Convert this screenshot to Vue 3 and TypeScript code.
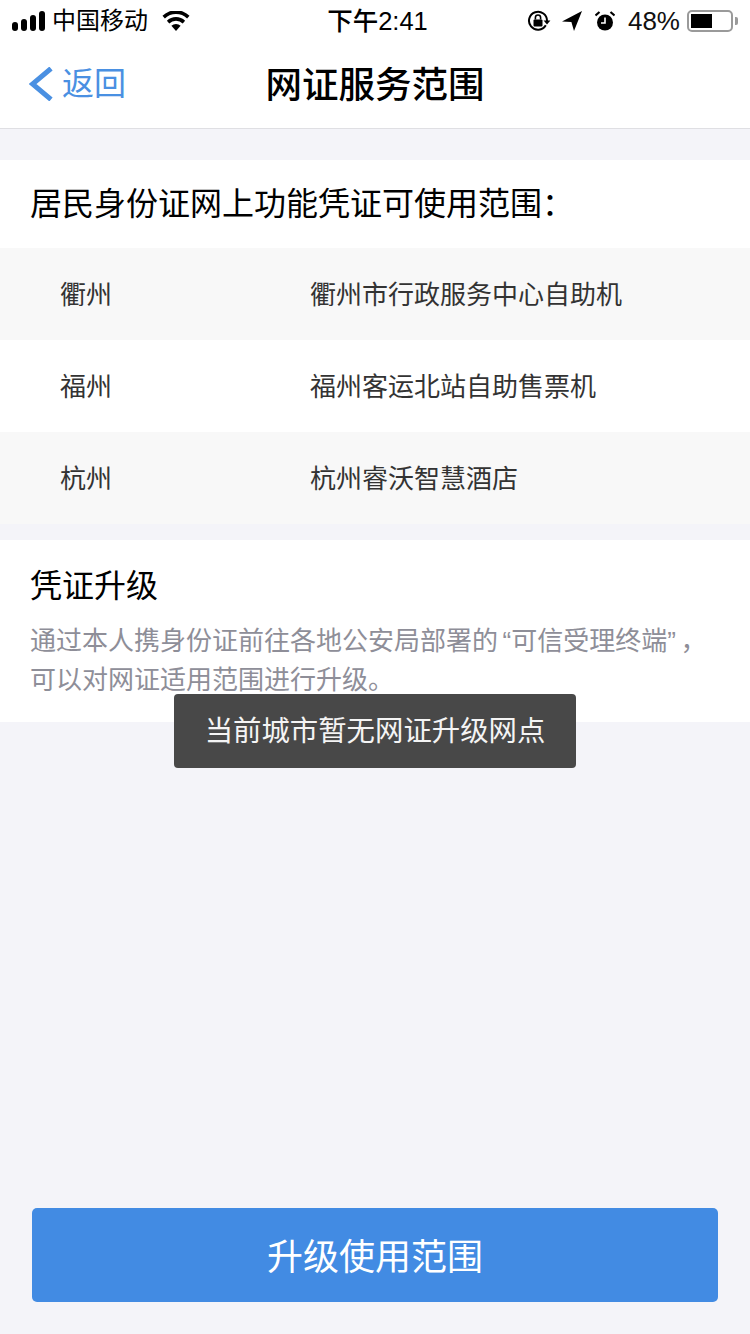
<script setup lang="ts">
const rows = [
  { city: '衢州', place: '衢州市行政服务中心自助机' },
  { city: '福州', place: '福州客运北站自助售票机' },
  { city: '杭州', place: '杭州睿沃智慧酒店' },
]
</script>

<template>
  <div class="page">
    <div class="status">
      <div class="st-left">
        <div class="signal"><i class="b1"></i><i class="b2"></i><i class="b3"></i><i class="b4"></i></div>
        <span class="carrier">中国移动</span>
        <svg class="wifi" width="28" height="20" viewBox="0 0 28 20">
          <path d="M14 20l-4.6-5.2a6.6 6.6 0 0 1 9.2 0z" fill="#000"/>
          <path d="M7.3 12.4l-2.4-2.7a13 13 0 0 1 18.2 0l-2.4 2.7a9.6 9.6 0 0 0-13.4 0z" fill="#000"/>
          <path d="M2.9 7.4L.5 4.7a19.6 19.6 0 0 1 27 0l-2.4 2.7a16.2 16.2 0 0 0-22.2 0z" fill="#000"/>
        </svg>
      </div>
      <div class="st-time">下午2:41</div>
      <div class="st-right">
        <svg class="lock" width="24" height="22" viewBox="0 0 24 22">
          <path d="M18.800 15.200A9 9 0 1 1 20 11" fill="none" stroke="#000" stroke-width="2"/>
          <path d="M16.600 10.400h6.800L20 14.600z" fill="#000"/>
          <rect x="6.500" y="9.500" width="9" height="7" rx="1" fill="#000"/>
          <path d="M8.400 9.500V7.600a2.600 2.600 0 0 1 5.200 0v1.900" fill="none" stroke="#000" stroke-width="1.600"/>
        </svg>
        <svg class="loc" width="20" height="20" viewBox="0 0 20 20"><path d="M20 0L0 10.600l9.400.4 2.600 9z" fill="#000"/></svg>
        <svg class="alarm" width="20" height="20" viewBox="0 0 20 20">
          <circle cx="10" cy="11.500" r="8" fill="#000"/>
          <path d="M10 6.500v5.500H6" fill="none" stroke="#fff" stroke-width="1.600"/>
          <path d="M0.500 4.500L4.500 1M19.500 4.500L15.500 1" stroke="#000" stroke-width="2.200" fill="none"/>
        </svg>
        <span class="pct">48%</span>
        <div class="batt"><div class="batt-fill"></div></div>
        <div class="batt-tip"></div>
      </div>
    </div>

    <header class="nav">
      <div class="back">
        <svg width="24" height="34" viewBox="0 0 24 34"><path d="M22 1.500L3.500 17l18.500 15.500" fill="none" stroke="#4a90e2" stroke-width="5"/></svg>
        <span>返回</span>
      </div>
      <h1 class="title">网证服务范围</h1>
    </header>

    <section class="scope">
      <h2 class="scope-title">居民身份证网上功能凭证可使用范围：</h2>
      <div v-for="r in rows" :key="r.city" class="row">
        <span class="city">{{ r.city }}</span>
        <span class="place">{{ r.place }}</span>
      </div>
    </section>

    <section class="upgrade">
      <h2 class="up-title">凭证升级</h2>
      <p class="up-desc"><span>通过本人携身份证前往各地公安局部署的</span><span class="quote-open">“</span><span>可信受理终端</span><span class="quote-close">”</span><span>，</span><span>可以对网证适用范围进行升级。</span></p>
    </section>

    <div class="toast">当前城市暂无网证升级网点</div>

    <button class="cta">升级使用范围</button>
  </div>
</template>

<style>
html, body { margin: 0; padding: 0; }
</style>

<style scoped>
* { box-sizing: border-box; }
.page {
  position: relative;
  width: 750px;
  height: 1334px;
  overflow: hidden;
  display: flex;
  flex-direction: column;
  background: #f4f4f9;
  font-family: "Liberation Sans", "Noto Sans CJK SC", sans-serif;
  color: #000;
}
.status {
  height: 40px;
  background: #fff;
  display: grid;
  grid-template-columns: 1fr auto 1fr;
  align-items: center;
  font-size: 24px;
}
.st-left { display: flex; align-items: center; padding-left: 12px; }
.signal { display: flex; align-items: flex-end; gap: 3px; height: 20px; margin-right: 7px; }
.signal i { display: block; width: 6px; background: #000; border-radius: 3px; }
.b1 { height: 9px; }
.b2 { height: 12px; }
.b3 { height: 16px; }
.b4 { height: 20px; }
.wifi { margin-left: 14px; }
.carrier { line-height: 42px; }
.st-time { font-size: 25.500px; font-weight: 500; line-height: 40px; padding-left: 5px; }
.st-right { display: flex; align-items: center; justify-content: flex-end; }
.loc { margin-left: 11px; }
.alarm { margin-left: 13px; }
.pct { margin-left: 13px; font-size: 26px; color: #111; line-height: 42px; }
.batt {
  width: 46px;
  height: 22px;
  margin-left: 7px;
  border: 2px solid #9a9a9a;
  border-radius: 5px;
  padding: 2px;
}
.batt-fill { width: 21px; height: 100%; background: #000; }
.batt-tip { width: 3px; height: 8px; margin: 0 12px 0 2px; background: #9a9a9a; border-radius: 0 2px 2px 0; }

.nav {
  position: relative;
  height: 89px;
  flex: none;
  padding-top: 3px;
  background: #fff;
  border-bottom: 1px solid #dfdfe3;
  display: flex;
  align-items: center;
  justify-content: center;
}
.back {
  position: absolute;
  left: 29px;
  top: 27px;
  display: flex;
  align-items: center;
  gap: 9px;
  color: #4a90e2;
  font-size: 32px;
  line-height: 34px;
}
.title {
  margin: 0;
  font-size: 36.500px;
  font-weight: 500;
  line-height: 80px;
  color: #000;
}

.scope { margin-top: 31px; background: #fff; }
.scope-title {
  margin: 0;
  height: 88px;
  padding-left: 30px;
  font-size: 32px;
  font-weight: 400;
  line-height: 88px;
}
.row {
  height: 92px;
  display: flex;
  align-items: center;
  padding-bottom: 4px;
  font-size: 26px;
  color: #333;
  background: #fff;
}
.row:nth-of-type(odd) { background: #f8f8f8; }
.city { width: 310px; padding-left: 60px; }

.upgrade {
  margin-top: 16px;
  height: 182px;
  padding: 26px 30px 0;
  background: #fff;
}
.up-title {
  margin: 0;
  font-size: 32px;
  font-weight: 400;
  line-height: 40px;
}
.up-desc {
  margin: 16px 0 0;
  font-size: 26px;
  line-height: 39px;
  color: #8e8e98;
}
.quote-open { padding-left: 4.500px; }
.quote-close { padding-right: 4.500px; }

.toast {
  position: absolute;
  left: 174px;
  top: 694px;
  width: 402px;
  height: 74px;
  border-radius: 4px;
  background: #484848;
  color: #f4f4f4;
  font-size: 28.400px;
  line-height: 74px;
  text-align: center;
}

.cta {
  display: block;
  margin: auto 32px 32px;
  width: 686px;
  height: 94px;
  border: 0;
  border-radius: 5px;
  background: #428be3;
  color: #fff;
  font-family: inherit;
  font-size: 36px;
  line-height: 94px;
  padding: 3px 0 0;
}
</style>
